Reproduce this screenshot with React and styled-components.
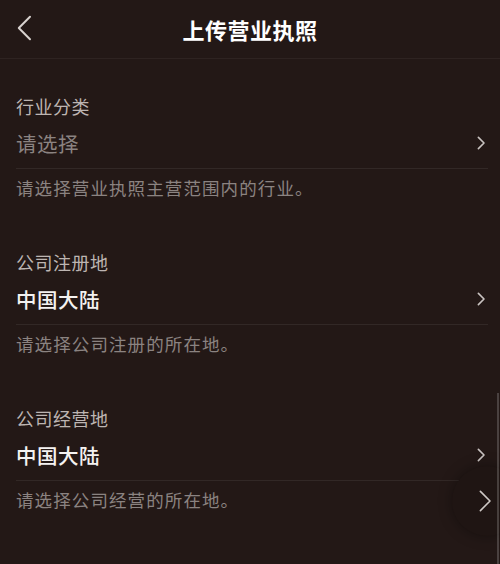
import React from 'react';
import styled, { createGlobalStyle } from 'styled-components';

const GlobalStyle = createGlobalStyle`
    html, body {
        margin: 0;
        padding: 0;
        background: #231816;
    }
    body {
        font-family: "Noto Sans CJK SC", "Noto Sans", sans-serif;
    }
`;

const sections = [
    { label: '行业分类', value: '请选择', placeholder: true, hint: '请选择营业执照主营范围内的行业。' },
    { label: '公司注册地', value: '中国大陆', hint: '请选择公司注册的所在地。' },
    { label: '公司经营地', value: '中国大陆', hint: '请选择公司经营的所在地。' },
];

const Chevron = ({ dir = 'right', size = 14, stroke = 1.6 }) => (
    <svg width={size * 0.6} height={size} viewBox="0 0 6 10" fill="none">
        <path
            d={dir === 'right' ? 'M1 1 L5 5 L1 9' : 'M5 1 L1 5 L5 9'}
            stroke="currentColor"
            strokeWidth={stroke * 6 / (size * 0.6)}
            strokeLinecap="round"
            strokeLinejoin="round"
        />
    </svg>
);

const App = () => {
    return (
        <Page>
            <GlobalStyle />
            <Header>
                <BackButton>
                    <Chevron dir="left" size={28} stroke={2} />
                </BackButton>
                <Title>上传营业执照</Title>
            </Header>
            <Content>
                {sections.map((s) => (
                    <Section key={s.label}>
                        <Label>{s.label}</Label>
                        <ValueRow>
                            <Value $placeholder={s.placeholder}>{s.value}</Value>
                            <RowArrow>
                                <Chevron size={14} stroke={1.6} />
                            </RowArrow>
                        </ValueRow>
                        <Hint>{s.hint}</Hint>
                    </Section>
                ))}
            </Content>
            <FloatButton>
                <Chevron size={24} stroke={1.6} />
            </FloatButton>
            <ScrollBar />
        </Page>
    );
};

const Page = styled.div`
    position: relative;
    width: 500px;
    height: 564px;
    overflow: hidden;
    background: #231816;
`;

const Header = styled.div`
    position: relative;
    height: 58px;
    display: flex;
    align-items: center;
    justify-content: center;
    border-bottom: 1px solid rgba(255, 255, 255, 0.05);
`;

const BackButton = styled.div`
    position: absolute;
    left: 16px;
    top: 14px;
    color: #d8d2cf;
    display: flex;
`;

const Title = styled.h1`
    margin: 0;
    font-size: 22px;
    font-weight: 700;
    color: #ffffff;
    letter-spacing: 0.5px;
`;

const Content = styled.div`
    padding: 35px 12px 0 16px;
`;

const Section = styled.div`
    margin-bottom: 50px;
`;

const Label = styled.div`
    font-size: 18px;
    line-height: 24px;
    color: #bdb5b2;
    letter-spacing: 0.5px;
`;

const ValueRow = styled.div`
    height: 50px;
    display: flex;
    align-items: center;
    justify-content: space-between;
    border-bottom: 1px solid rgba(255, 255, 255, 0.07);
`;

const Value = styled.div`
    font-size: 20.5px;
    font-weight: ${(p) => (p.$placeholder ? 400 : 500)};
    color: ${(p) => (p.$placeholder ? '#8b8381' : '#f4f2f1')};
    letter-spacing: 0.5px;
`;

const RowArrow = styled.div`
    display: flex;
    color: #c9c3c1;
    margin-right: 3px;
`;

const Hint = styled.div`
    padding-top: 7px;
    font-size: 17.5px;
    line-height: 24px;
    color: #8b8381;
    letter-spacing: 1.1px;
`;

const FloatButton = styled.div`
    position: absolute;
    left: 452px;
    top: 466px;
    width: 70px;
    height: 70px;
    border-radius: 50%;
    background: #1f1513;
    box-shadow: 0 0 14px rgba(0, 0, 0, 0.35);
    display: flex;
    align-items: center;
    padding-left: 26px;
    box-sizing: border-box;
    color: #cfc9c6;
`;

const ScrollBar = styled.div`
    position: absolute;
    right: 1px;
    top: 393px;
    width: 2px;
    height: 180px;
    background: rgba(255, 255, 255, 0.18);
`;

export default App;
